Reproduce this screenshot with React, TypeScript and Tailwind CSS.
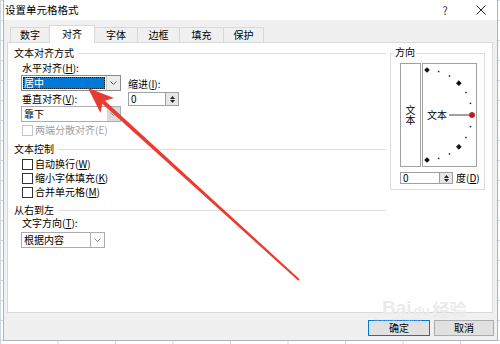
import React from "react";

const TABS = [
  { label: "数字", w: "w-[40px]" },
  { label: "对齐", w: "w-[46px]", active: true },
  { label: "字体", w: "w-[44px]" },
  { label: "边框", w: "w-[43px]" },
  { label: "填充", w: "w-[45px]" },
  { label: "保护", w: "w-[41px]" },
];

function Chevron({ color = "#606060" }: { color?: string }) {
  return (
    <svg width="7" height="4" viewBox="0 0 7 4">
      <polyline points="0.5,0.5 3.5,3.5 6.5,0.5" fill="none" stroke={color} strokeWidth="1" />
    </svg>
  );
}

function Spinner({ inputW }: { inputW: string }) {
  return (
    <div className="flex h-full">
      <div className={`${inputW} h-full border border-[#a0a0a0] bg-white flex items-center pl-[2px]`}>0</div>
      <div className="w-[13px] h-full border border-l-0 border-[#a0a0a0] bg-[#e6e6e6] flex flex-col items-center justify-center gap-[1px]">
        <svg width="5" height="3" viewBox="0 0 5 3"><polygon points="2.5,0 5,3 0,3" fill="#222" /></svg>
        <svg width="5" height="3" viewBox="0 0 5 3"><polygon points="0,0 5,0 2.5,3" fill="#222" /></svg>
      </div>
    </div>
  );
}

function Check({ children, disabled }: { children: React.ReactNode; disabled?: boolean }) {
  return (
    <div className="flex items-center h-full ml-[14px]">
      <div className={`w-[11px] h-[11px] border bg-white ${disabled ? "border-[#c4c4c4]" : "border-[#333]"}`} />
      <span className={`ml-[2px] ${disabled ? "text-[#a0a0a0]" : ""}`}>{children}</span>
    </div>
  );
}

function GroupHead({ title }: { title: string }) {
  return (
    <div className="flex items-center h-[14px] pl-[6px]">
      <span>{title}</span>
      <div className="flex-1 h-px bg-[#dcdcdc] ml-[4px]" />
    </div>
  );
}

function Dial() {
  const pts = [];
  for (let a = 90; a >= -90; a -= 15) {
    const r = (a * Math.PI) / 180;
    pts.push({ a, x: 4 + 45 * Math.cos(r), y: 51 - 45 * Math.sin(r) });
  }
  return (
    <svg className="absolute inset-0" width="53" height="102" viewBox="0 0 53 102">
      <line x1="26" y1="51" x2="46" y2="51" stroke="#808080" strokeWidth="1.5" />
      {pts.map((p) =>
        p.a === 0 ? (
          <circle key={p.a} cx={p.x} cy={p.y} r="2.6" fill="#e01010" stroke="#900" strokeWidth="0.6" />
        ) : Math.abs(p.a) % 45 === 0 ? (
          <rect key={p.a} x={p.x - 2} y={p.y - 2} width="4" height="4" fill="#111" transform={`rotate(45 ${p.x} ${p.y})`} />
        ) : (
          <rect key={p.a} x={p.x - 0.75} y={p.y - 0.75} width="1.5" height="1.5" fill="#222" />
        )
      )}
    </svg>
  );
}

export default function App() {
  return (
    <div className="relative w-[500px] h-[344px] overflow-hidden bg-white bg-[linear-gradient(to_right,#cfd6df_1px,transparent_1px),linear-gradient(to_bottom,#cfd6df_1px,transparent_1px)] bg-[length:57.5px_20px] text-[10px] leading-none text-black [font-family:'Noto_Sans_CJK_SC','Noto_Sans',sans-serif]">
      <div className="ml-[3px] w-[495px] h-[341px] flex flex-col border-x border-b border-[#aab4c0] bg-[#f0f0f0]">
        {/* Title bar */}
        <div className="h-[20px] bg-white flex items-center pl-[1px] pr-[11px]">
          <span className="text-[10.5px]">设置单元格格式</span>
          <div className="flex-1" />
          <span className="w-[10px] text-center text-[11px] text-[#333]">?</span>
          <svg className="ml-[26px]" width="10" height="10" viewBox="0 0 10 10">
            <path d="M0.5 0.5 L9.5 9.5 M9.5 0.5 L0.5 9.5" stroke="#222" strokeWidth="1" />
          </svg>
        </div>

        {/* Tabs */}
        <div className="h-[22px] flex items-end pl-[6px]">
          {TABS.map((t, i) => (
            <div
              key={t.label}
              className={`${t.w} ${i > 0 ? "-ml-px" : ""} flex items-center justify-center border-t border-x border-[#d9d9d9] ${
                t.active ? "h-[18px] bg-white relative z-10 -mb-px pb-px" : "h-[15px] bg-[#f0f0f0]"
              }`}
            >
              {t.label}
            </div>
          ))}
        </div>

        {/* Panel */}
        <div className="ml-[3px] w-[486px] h-[271px] border border-[#d9d9d9] bg-white flex">
          <div className="w-[378px] flex flex-col pt-[3px]">
            <GroupHead title="文本对齐方式" />
            <div className="flex ml-[13px] mt-[1px]">
              <div className="flex flex-col w-[101px]">
                <div className="h-[14px] flex items-center pl-[1px]">水平对齐(<u>H</u>):</div>
                <div className="flex h-[16px] w-[100px] border border-[#8a8a8a] bg-white">
                  <div className="flex-1 m-px bg-[#0078d7] text-white flex items-center pl-[1px] outline-1 outline-dotted outline-[#1a1a1a] -outline-offset-1">
                    居中
                  </div>
                  <div className="w-[14px] border-l border-[#c8c8c8] bg-[#ececec] flex items-center justify-center">
                    <Chevron />
                  </div>
                </div>
                <div className="h-[14px] mt-[1px] flex items-center pl-[1px]">垂直对齐(<u>V</u>):</div>
                <div className="flex h-[16px] w-[100px] border border-[#adadad] bg-white">
                  <div className="flex-1 flex items-center pl-[2px]">靠下</div>
                  <div className="w-[13px] bg-[#dadada] flex items-center justify-center">
                    <Chevron color="#8a8a8a" />
                  </div>
                </div>
              </div>
              <div className="flex flex-col ml-[6px]">
                <div className="h-[12px] mt-[17px] flex items-center">缩进(<u>I</u>):</div>
                <div className="h-[14px] mt-[2px]">
                  <Spinner inputW="w-[38px]" />
                </div>
              </div>
            </div>
            <div className="h-[12px] mt-[2px]">
              <Check disabled>两端分散对齐(E)</Check>
            </div>
            <div className="mt-[6px]">
              <GroupHead title="文本控制" />
            </div>
            <div className="h-[14px] mt-[1px]"><Check>自动换行(<u>W</u>)</Check></div>
            <div className="h-[14px]"><Check>缩小字体填充(<u>K</u>)</Check></div>
            <div className="h-[14px]"><Check>合并单元格(<u>M</u>)</Check></div>
            <div className="mt-[4px]">
              <GroupHead title="从右到左" />
            </div>
            <div className="h-[12px] flex items-center ml-[14px]">文字方向(<u>T</u>):</div>
            <div className="flex h-[16px] w-[84px] ml-[13px] mt-[3px] border border-[#adadad] bg-white">
              <div className="flex-1 flex items-center pl-[2px]">根据内容</div>
              <div className="w-[14px] border-l border-[#adadad] bg-white flex items-center justify-center">
                <Chevron color="#8a8a8a" />
              </div>
            </div>
          </div>

          {/* 方向 */}
          <div className="relative ml-[4px] mt-[10px] w-[95px] h-[137px] border border-[#dcdcdc] pl-[9px] pt-[9px]">
            <span className="absolute -top-[7px] left-[3px] bg-white px-px">方向</span>
            <div className="flex">
              <div className="w-[21px] h-[104px] border border-[#a0a0a0] flex flex-col items-center justify-center leading-[10px]">
                <span>文</span>
                <span>本</span>
              </div>
              <div className="relative ml-px w-[55px] h-[104px] border border-[#a0a0a0] flex items-center pl-[4px]">
                <span className="relative z-10">文本</span>
                <Dial />
              </div>
            </div>
            <div className="flex items-center h-[12px] mt-[5px]">
              <Spinner inputW="w-[40px]" />
              <span className="ml-[3px]">度(<u>D</u>)</span>
            </div>
          </div>
        </div>

        {/* Buttons */}
        <div className="flex justify-end gap-[4px] pr-[3px] mt-[7px]">
          <div className="w-[62px] h-[16px] border border-[#0078d7] bg-[#e1e1e1] flex items-center justify-center">确定</div>
          <div className="w-[60px] h-[16px] border border-[#adadad] bg-[#e1e1e1] flex items-center justify-center">取消</div>
        </div>
      </div>

      {/* Watermark */}
      <div className="absolute left-[382px] top-[298px] flex items-end text-[#ebebeb] pointer-events-none">
        <span className="text-[19px] font-bold [font-family:'Liberation_Sans',sans-serif]">Bai</span>
        <span className="ml-[2px] text-[13px] font-bold [font-family:'Liberation_Sans',sans-serif]">du</span>
        <span className="ml-[3px] text-[17px] font-bold">经验</span>
      </div>
      <div className="absolute left-[374px] top-[317px] text-[8px] text-[#dcdcdc] opacity-60 pointer-events-none [font-family:'Liberation_Sans',sans-serif]">
        jingyan.baidu
      </div>

      {/* Red arrow */}
      <svg className="absolute inset-0 pointer-events-none" width="500" height="344" viewBox="0 0 500 344">
        <polygon points="101.5,103 104.1,100 299.7,279.3 298.3,280.7" fill="#ea3b32" />
        <polygon points="88,88 113.9,98.1 102.8,101.5 100.5,112.9" fill="#ea3b32" />
      </svg>
    </div>
  );
}
